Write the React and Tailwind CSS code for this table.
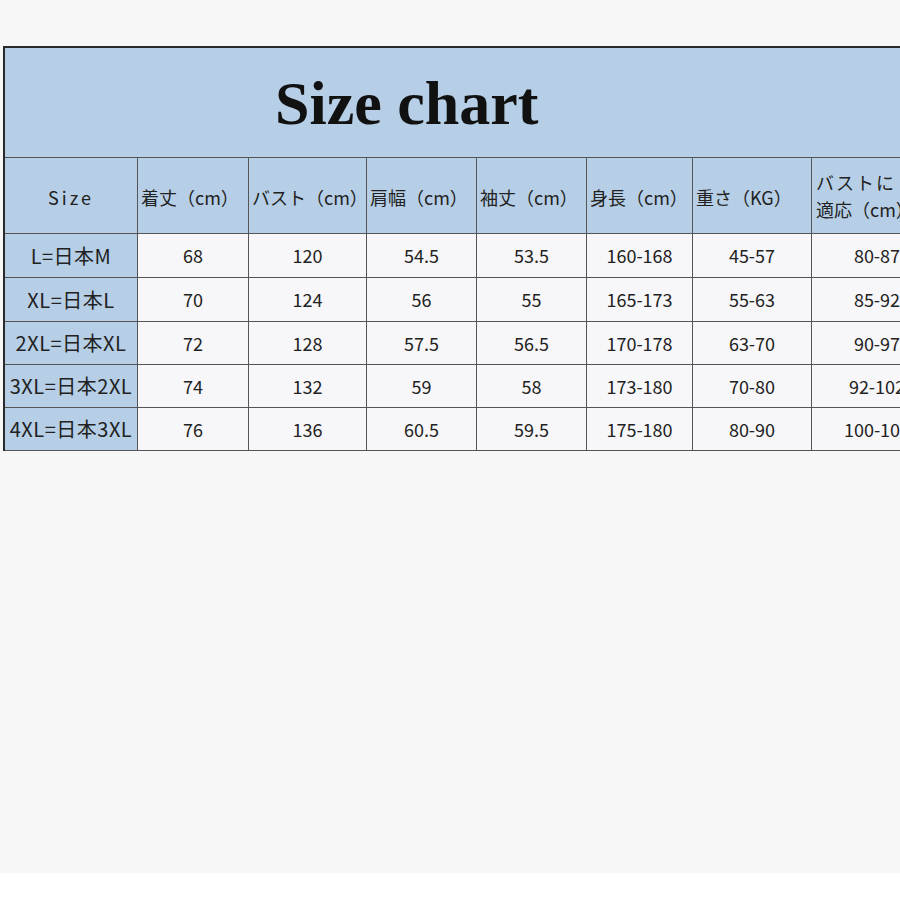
export default function App() {
  const cols = "grid-cols-[133px_111px_118px_110px_110px_106px_119px_130px]";
  const headers = ["着丈（cm）", "バスト（cm）", "肩幅（cm）", "袖丈（cm）", "身長（cm）", "重さ（KG）"];
  const rows = [
    ["L=日本M", "68", "120", "54.5", "53.5", "160-168", "45-57", "80-87"],
    ["XL=日本L", "70", "124", "56", "55", "165-173", "55-63", "85-92"],
    ["2XL=日本XL", "72", "128", "57.5", "56.5", "170-178", "63-70", "90-97"],
    ["3XL=日本2XL", "74", "132", "59", "58", "173-180", "70-80", "92-102"],
    ["4XL=日本3XL", "76", "136", "60.5", "59.5", "175-180", "80-90", "100-107"],
  ];
  const rowH = ["h-[44px]", "h-[44px]", "h-[43px]", "h-[43px]", "h-[43px]"];
  const font = { fontFamily: '"Noto Sans CJK JP", "Noto Sans", sans-serif' };
  return (
    <div className="h-[873px] w-[900px] overflow-hidden bg-[#f7f7f7] pt-[46px] pl-[3px]" style={font}>
      <div className="w-[939px] border-t-2 border-l-2 border-[#2a2a2a] text-[#222]">
        <div className="flex h-[110px] items-center border-b border-[#555] bg-[#b6cfe6] pl-[270px]">
          <span
            className="text-[62px] font-bold leading-none text-[#111]"
            style={{ fontFamily: '"Liberation Serif", "DejaVu Serif", serif' }}
          >
            Size chart
          </span>
        </div>
        <div className={`grid ${cols} h-[76px] bg-[#b6cfe6]`}>
          <div className="flex items-center justify-center border-r border-b border-[#555] pt-[3px] text-[18px] tracking-[3px]">
            Size
          </div>
          {headers.map((h) => (
            <div key={h} className="flex items-center border-r border-b border-[#555] pt-[3px] pl-[3px] text-[18px] whitespace-nowrap">
              {h}
            </div>
          ))}
          <div className="flex flex-col justify-center border-b border-[#555] pl-[4px] text-[18px] leading-[27px] whitespace-nowrap">
            <span className="tracking-[2px]">バストに</span>
            <span>適応（cm）</span>
          </div>
        </div>
        {rows.map((r, i) => (
          <div key={i} className={`grid ${cols} ${rowH[i]}`}>
            {r.map((c, j) => (
              <div
                key={j}
                className={`flex items-center justify-center border-b border-[#555] whitespace-nowrap ${
                  j === 0 ? "bg-[#b6cfe6] text-[20px] tracking-[0.5px]" : "bg-[#f7f7f9] text-[18px]"
                } ${j < 7 ? "border-r" : ""}`}
              >
                {c}
              </div>
            ))}
          </div>
        ))}
      </div>
    </div>
  );
}
